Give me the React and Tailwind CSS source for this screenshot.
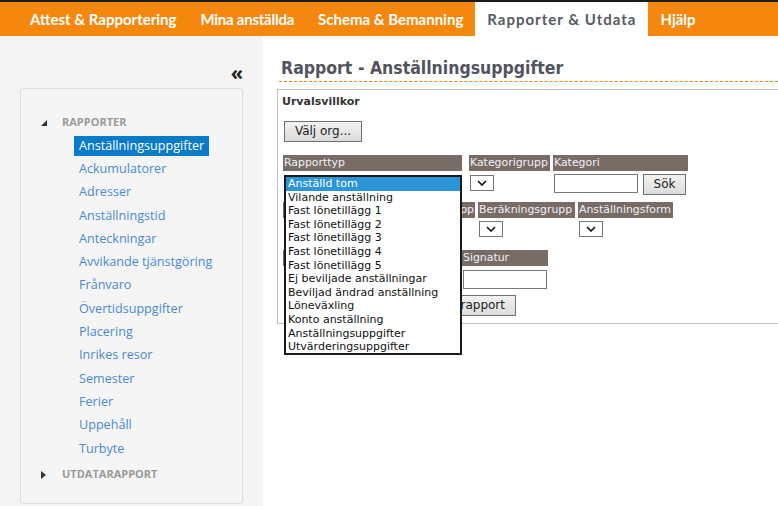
import React from "react";

const navItems = [
  { label: "Attest & Rapportering", track: "" },
  { label: "Mina anställda", track: "tracking-[-0.25px]" },
  { label: "Schema & Bemanning", track: "" },
  { label: "Rapporter & Utdata", track: "tracking-[1px]", active: true },
  { label: "Hjälp", track: "" },
];

const reports = [
  "Anställningsuppgifter",
  "Ackumulatorer",
  "Adresser",
  "Anställningstid",
  "Anteckningar",
  "Avvikande tjänstgöring",
  "Frånvaro",
  "Övertidsuppgifter",
  "Placering",
  "Inrikes resor",
  "Semester",
  "Ferier",
  "Uppehåll",
  "Turbyte",
];

const reportTypes = [
  "Anställd tom",
  "Vilande anställning",
  "Fast lönetillägg 1",
  "Fast lönetillägg 2",
  "Fast lönetillägg 3",
  "Fast lönetillägg 4",
  "Fast lönetillägg 5",
  "Ej beviljade anställningar",
  "Beviljad ändrad anställning",
  "Löneväxling",
  "Konto anställning",
  "Anställningsuppgifter",
  "Utvärderingsuppgifter",
];

const formFont = { fontFamily: '"DejaVu Sans", sans-serif' };

// Brown header cell above each form field
const Head = ({ w, children, right }) => (
  <div
    className={`h-[16px] bg-[#786d66] text-[#eef0f6] text-[10.9px] leading-[16px] px-[1px] overflow-hidden whitespace-nowrap ${right ? "text-right" : ""}`}
    style={{ width: w }}
  >
    {children}
  </div>
);

// Small closed select with a chevron
const MiniSelect = () => (
  <div className="w-[24px] h-[16px] border border-[#777] bg-white flex items-center justify-center">
    <svg width="10" height="6" viewBox="0 0 10 6">
      <path d="M1 1 L5 5 L9 1" stroke="#111" strokeWidth="1.6" fill="none" />
    </svg>
  </div>
);

const Button = ({ children, className = "" }) => (
  <div
    className={`h-[21px] border border-[#707070] bg-gradient-to-b from-[#f2f2f2] to-[#dcdcdc] text-[#222] text-[12px] leading-[19px] flex items-center justify-center ${className}`}
  >
    {children}
  </div>
);

export default function App() {
  return (
    <div className="w-[778px] h-[506px] overflow-hidden bg-white" style={{ fontFamily: '"Open Sans", sans-serif' }}>
      {/* Top navigation */}
      <div className="h-[36px] border-t-2 border-[#1b1b1b] bg-[#f5870f] flex pl-[18px]">
        {navItems.map((item) => (
          <div
            key={item.label}
            className={`h-full px-[12px] flex items-center text-[15px] font-bold ${item.track} ${
              item.active ? "bg-white text-[#555a63]" : "text-white"
            }`}
            style={{ fontFamily: 'Lato, sans-serif' }}
          >
            {item.label}
          </div>
        ))}
      </div>

      <div className="flex h-[470px]">
        {/* Sidebar */}
        <aside className="w-[263px] bg-[#f4f4f4] shrink-0 flex flex-col">
          <div className="h-[52px] flex items-end justify-end pr-[20px] pb-[5px]">
            <span className="text-[20px] font-bold leading-none text-[#222]">«</span>
          </div>
          <div className="mx-[20px] h-[416px] border border-[#dedede] rounded-[3px] bg-[#f5f5f5] pt-[22px]">
            <div className="h-[23px] flex items-center pl-[20px]">
              <svg width="6" height="6" viewBox="0 0 6 6" className="mr-[15px]">
                <path d="M6 0 L6 6 L0 6 Z" fill="#333" />
              </svg>
              <span className="text-[11px] font-bold text-[#9a9a9a]">RAPPORTER</span>
            </div>
            {reports.map((r, i) => (
              <div key={r} className="h-[23.3px] flex items-center pl-[53px]">
                <span
                  className={`text-[12.6px] px-[5px] leading-[20px] ${
                    i === 0 ? "bg-[#0a7bc9] text-white" : "text-[#4a8ad4]"
                  }`}
                >
                  {r}
                </span>
              </div>
            ))}
            <div className="h-[23px] mt-[3px] flex items-center pl-[20px]">
              <svg width="5" height="8" viewBox="0 0 5 8" className="mr-[16px]">
                <path d="M0 0 L5 4 L0 8 Z" fill="#333" />
              </svg>
              <span className="text-[11px] font-bold text-[#9a9a9a]">UTDATARAPPORT</span>
            </div>
          </div>
        </aside>

        {/* Main content */}
        <main className="flex-1 pt-[21px]">
          <div className="ml-[16px] pl-[2px] border-b border-dashed border-[#f5870f] pb-[2px]">
            <h1
              className="text-[17.5px] font-bold text-[#51545c] leading-[22px]"
              style={{ fontFamily: '"DejaVu Sans Condensed", "DejaVu Sans", sans-serif' }}
            >
              Rapport - Anställningsuppgifter
            </h1>
          </div>

          <div className="ml-[14px] mt-[7px] border-l border-t border-b border-[#c0c0c0] h-[235px] relative" style={formFont}>
            <div className="pl-[4px] pt-[5px] text-[11px] font-bold text-[#333] leading-[14px]">Urvalsvillkor</div>

            <div className="ml-[6px] mt-[12px]">
              <Button className="w-[78px]">Välj org...</Button>
            </div>

            {/* Row 1 */}
            <div className="ml-[5px] mt-[13px] flex">
              <Head w="179px">Rapporttyp</Head>
              <div className="w-[7px]" />
              <Head w="81px">Kategorigrupp</Head>
              <div className="w-[3px]" />
              <Head w="135px">Kategori</Head>
            </div>
            <div className="ml-[5px] mt-[3px] flex h-[21px] items-start">
              <div className="w-[179px]" />
              <div className="w-[8px]" />
              <div className="mt-[1px]">
                <MiniSelect />
              </div>
              <div className="w-[60px]" />
              <div className="w-[84px] h-[19px] border border-[#777] bg-white" />
              <div className="w-[5px]" />
              <Button className="w-[43px]">Sök</Button>
            </div>

            {/* Row 2 */}
            <div className="ml-[5px] mt-[7px] flex gap-[3px]">
              <Head w="97px" />
              <Head w="92px" right>
                Lönegrupp
              </Head>
              <Head w="97px">Beräkningsgrupp</Head>
              <Head w="95px">Anställningsform</Head>
            </div>
            <div className="ml-[201px] mt-[3px] flex h-[16px]">
              <MiniSelect />
              <div className="w-[76px]" />
              <MiniSelect />
            </div>

            {/* Row 3 */}
            <div className="ml-[5px] mt-[13px] flex gap-[3px]">
              <Head w="87px" />
              <Head w="86px" />
              <Head w="86px">Signatur</Head>
            </div>
            <div className="ml-[185px] mt-[4px] w-[84px] h-[19px] border border-[#777] bg-white" />
            <div className="ml-[5px] mt-[6px] w-[233px] flex justify-end">
              <Button className="px-[10px]">Skapa rapport</Button>
            </div>

            {/* Open dropdown list for Rapporttyp */}
            <div className="absolute left-[6px] top-[85px] w-[178px] h-[180px] border-2 border-[#1a1a1a] bg-white text-[11px] text-[#111] leading-[13.6px]">
              {reportTypes.map((t, i) => (
                <div key={t} className={`pl-[2px] h-[13.6px] whitespace-nowrap ${i === 0 ? "bg-[#2b95d6] text-white" : ""}`}>
                  {t}
                </div>
              ))}
            </div>
          </div>
        </main>
      </div>
    </div>
  );
}
